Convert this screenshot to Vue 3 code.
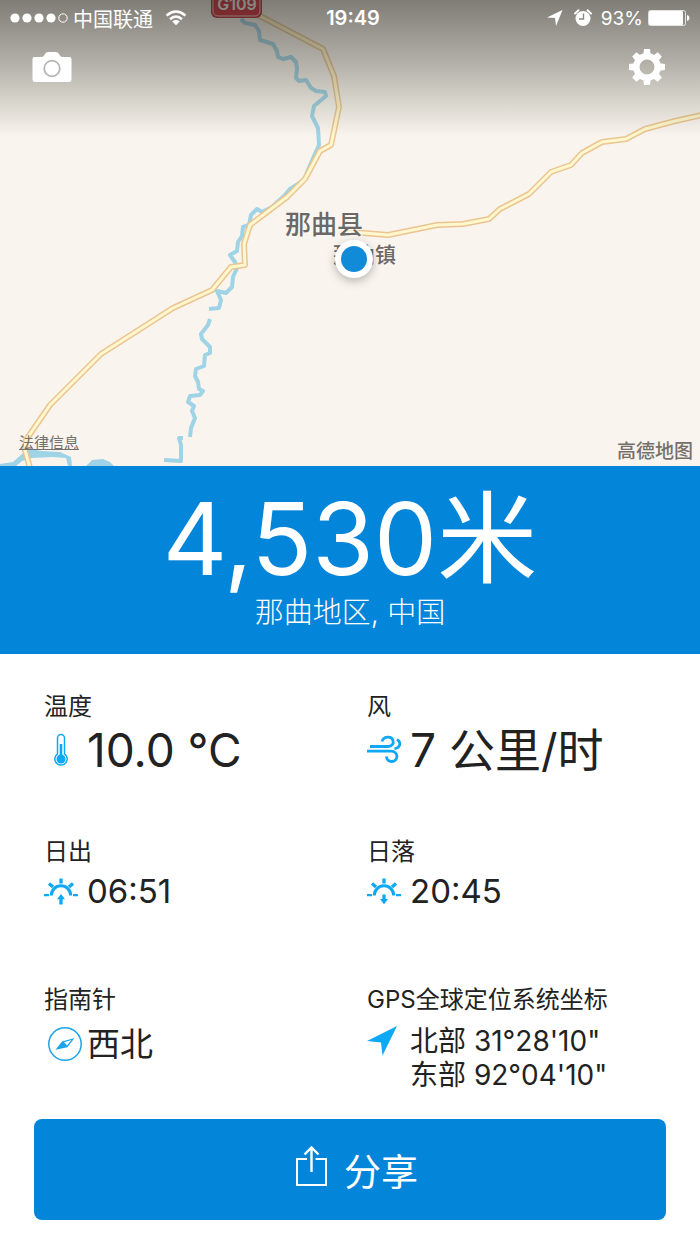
<script setup>
const teeth = [0, 45, 90, 135, 180, 225, 270, 315]
const road =
  'M240 8 L262 17 L323 49 L334 76 L339 107 L331 145 L320 151 L305 179 L287 197 L250 225 L244 244 L245 265 L231 267 L212 290 L173 308 L101 354 L50 405 L26 440 L25 450 L30 468'
const eastRoad =
  'M340 231 L388 235 L437 225 L463 224 L489 219 L500 209 L529 194 L551 172 L571 165 L582 153 L602 142 L626 139 L645 129 L675 121 L702 115'
</script>

<template>
  <main class="app">
    <section class="map" aria-label="地图">
      <svg class="map-art" viewBox="0 0 700 466" preserveAspectRatio="xMidYMax slice">
        <defs>
          <filter id="pinShadow" x="-50%" y="-50%" width="200%" height="200%">
            <feDropShadow dx="0" dy="3" stdDeviation="5" flood-color="#000" flood-opacity="0.28" />
          </filter>
        </defs>
        <g class="river">
          <path d="M241 19 L245 23 L255 25 L259 31 L260 40 L273 44 L277 51 L278 57 L283 59 L291 57 L296 62 L297 69 L296 78 L299 81 L306 80 L311 88 L316 91 L325 92 L326 96 L314 106 L312 116 L318 128 L319 145 L314 156 L308 170 L305 179 L298 184 L290 189 L284 196 L272 207 L262 212 L257 209 L251 215 L249 225 L243 227 L242 236 L238 242 L237 251 L230 255 L235 262 L237 268 L233 277 L232 287 L226 293 L217 291 L221 300 L219 308 L209 309" />
          <path d="M210 319 L208 325 L201 334 L202 339 L210 347 L210 353 L205 355 L204 366 L196 369 L195 376 L198 382 L199 389 L203 391 L200 395 L190 396 L188 402 L194 406 L192 411 L195 418 L191 428 L190 437" />
          <path d="M183 438 L179 438 L181 445 L181 461 L164 460" />
        </g>
        <path class="lake" d="M0 464 L13 462 L22 454 L30 449 L42 451 L60 452 L71 457 L72 466 L68 466 L66 458 L52 457 L32 458 L22 461 L16 466 L0 466Z M86 466 L92 460 L103 459 L110 462 L114 466Z" />
        <path class="road-edge" :d="eastRoad" />
        <path class="road-fill" :d="eastRoad" />
        <path class="road-edge" :d="road" />
        <path class="road-fill" :d="road" />
        <rect class="shield-rim" x="211" y="-16" width="51" height="34" rx="6" />
        <rect class="shield" x="213" y="-16" width="47" height="32" rx="5" />
        <text class="shield-text" x="237" y="10">G109</text>
        <text class="town county" x="285" y="234">那曲县</text>
        <text class="town" x="333" y="262">那曲镇</text>
        <circle cx="354" cy="259" r="19" fill="#fff" filter="url(#pinShadow)" />
        <circle cx="354" cy="259" r="13" fill="#118bd8" />
      </svg>
      <div class="shade"></div>

      <header class="overlay">
        <div class="status">
          <div class="carrier">
            <svg width="58" height="12" viewBox="0 0 58 12" fill="#fff">
              <circle cx="5" cy="6" r="4.6" /><circle cx="17" cy="6" r="4.6" />
              <circle cx="29" cy="6" r="4.6" /><circle cx="41" cy="6" r="4.6" />
              <circle cx="53" cy="6" r="4.2" fill="none" stroke="#fff" />
            </svg>
            <span>中国联通</span>
            <svg class="wifi" width="22" height="16" viewBox="0 0 22 16">
              <path d="M1.500 5.500 Q11 -2.500 20.500 5.500 M5 9.200 Q11 4 17 9.200" fill="none" stroke="#fff" stroke-width="2.600" />
              <path d="M7.200 11.500 Q11 8.600 14.800 11.500 L11 15.300Z" fill="#fff" />
            </svg>
          </div>
          <time class="clock">19:49</time>
          <div class="power">
            <svg width="16" height="16" viewBox="0 0 16 16"><path d="M0 7.500 L15.500 0 L9 16 L8 8Z" fill="#fff" /></svg>
            <svg class="alarm" width="18" height="18" viewBox="0 0 18 18">
              <circle cx="9" cy="9.500" r="7.500" fill="#fff" />
              <path d="M1 4.500 L4.500 1.300 M17 4.500 L13.500 1.300" stroke="#fff" stroke-width="2" stroke-linecap="round" />
              <path d="M9.500 4.500 V10 H5" fill="none" stroke="#8b8984" stroke-width="1.400" />
            </svg>
            <span class="percent">93%</span>
            <svg width="42" height="18" viewBox="0 0 42 18">
              <rect x="0.500" y="1.500" width="37" height="15" rx="2" fill="none" stroke="#fff" stroke-opacity=".75" />
              <rect x="1" y="2" width="34" height="14" rx="1" fill="#fff" />
              <path d="M39 6 Q41.500 6.500 41.500 9 T39 12Z" fill="#fff" />
            </svg>
          </div>
        </div>
        <div class="tools">
          <button type="button" aria-label="相机">
            <svg width="40" height="38" viewBox="0 0 40 38">
              <path d="M2 9 H9 Q11 9 12 7.500 L13 6 Q14 4 16 4 H24 Q26 4 27 6 L28 7.500 Q29 9 31 9 H37.500 Q39.500 9 39.500 11 V31.500 Q39.500 34 37.500 34 H2.500 Q.5 34 .5 31.500 V11 Q.5 9 2 9Z" fill="#fff" />
              <circle cx="20" cy="20.500" r="7.800" fill="none" stroke="#b5b3ae" stroke-width="1.700" />
            </svg>
          </button>
          <button type="button" aria-label="设置">
            <svg width="38" height="38" viewBox="-19 -19 38 38">
              <circle r="10.700" fill="none" stroke="#fff" stroke-width="6.400" />
              <path v-for="t in teeth" :key="t" :transform="`rotate(${t})`" d="M-3.700 -12 L-3 -18 H3 L3.700 -12Z" fill="#fff" />
            </svg>
          </button>
        </div>
      </header>

      <footer class="credits">
        <a href="#legal">法律信息</a>
        <span class="provider">高德地图</span>
      </footer>
    </section>

    <section class="altitude">
      <h1>4,530米</h1>
      <p>那曲地区, 中国</p>
    </section>

    <dl class="metrics">
      <div class="metric">
        <dt>温度</dt>
        <dd class="large">
          <svg class="icon" width="34" height="34" viewBox="0 0 34 34">
            <path d="M13.500 20.800 V5 A3.500 3.500 0 0 1 20.500 5 V20.800 A6.200 6.200 0 1 1 13.500 20.800Z" fill="none" stroke="#0ea8f4" stroke-width="1.500" />
            <path d="M17 11 V25" stroke="#0ea8f4" stroke-width="2.600" />
            <circle cx="17" cy="26" r="4.500" fill="#0ea8f4" />
          </svg>
          <span>10.0 °C</span>
        </dd>
      </div>
      <div class="metric">
        <dt>风</dt>
        <dd class="large">
          <svg class="icon" width="34" height="34" viewBox="0 0 34 34" fill="none" stroke="#0ea8f4" stroke-width="2.800">
            <path d="M3 13.500 H21 C25 13.500 27 10.500 26 7.500 C24.500 2.500 16.500 3 15 8.500" />
            <path d="M0 18.200 H24 C31.500 18.200 32 28 25 28.500 C22 28.700 19.500 27 19.500 23.500" />
            <path d="M27.500 15.500 C33.500 15 34.500 9 30 6.500" />
          </svg>
          <span>7 公里/时</span>
        </dd>
      </div>
      <div class="metric sun">
        <dt>日出</dt>
        <dd>
          <svg class="icon" width="34" height="34" viewBox="0 0 34 34" fill="none" stroke="#0ea8f4" stroke-width="3">
            <path d="M7.300 21.500 A9.700 9.700 0 0 1 26.700 21.500" />
            <path d="M17 4.500 V9.500 M5 9.500 L9 13 M29 9.500 L25 13" stroke-width="3.300" />
            <path d="M0 21.200 H5 M29 21.200 H34" stroke-width="2.200" />
            <path d="M17 30.500 V24" stroke-width="3.300" /><path d="M13 25.200 L17 20 L21 25.200Z" fill="#0ea8f4" stroke="none" />
          </svg>
          <span>06:51</span>
        </dd>
      </div>
      <div class="metric sun">
        <dt>日落</dt>
        <dd>
          <svg class="icon" width="34" height="34" viewBox="0 0 34 34" fill="none" stroke="#0ea8f4" stroke-width="3">
            <path d="M7.300 21.500 A9.700 9.700 0 0 1 26.700 21.500" />
            <path d="M17 4.500 V9.500 M5 9.500 L9 13 M29 9.500 L25 13" stroke-width="3.300" />
            <path d="M0 21.200 H5 M29 21.200 H34" stroke-width="2.200" />
            <path d="M17 20.500 V26" stroke-width="3.300" /><path d="M13 25 L17 30.200 L21 25Z" fill="#0ea8f4" stroke="none" />
          </svg>
          <span>20:45</span>
        </dd>
      </div>
      <div class="metric">
        <dt>指南针</dt>
        <dd class="heading">
          <svg class="icon compass" width="34" height="34" viewBox="0 0 34 34">
            <circle cx="17" cy="17" r="16.200" fill="none" stroke="#1aa5ea" stroke-width="1.500" />
            <path d="M7.500 22.800 L14 14.500 L26.500 11 L19.500 20.200Z" fill="#1aa5ea" />
            <path d="M18 17.300 L16 15.200 L23.500 13 L19 18.500Z" fill="#fff" />
          </svg>
          <span>西北</span>
        </dd>
      </div>
      <div class="metric">
        <dt>GPS全球定位系统坐标</dt>
        <dd class="coords">
          <svg class="icon" width="34" height="34" viewBox="0 0 34 34"><path d="M0 17 L30 2 L15.500 31.500 L14 18.500Z" fill="#0ea8f4" /></svg>
          <span>北部 31°28'10"<br />东部 92°04'10"</span>
        </dd>
      </div>
    </dl>

    <button class="share" type="button">
      <svg class="share-icon" width="34" height="42" viewBox="0 0 34 42" fill="none" stroke="#fff" stroke-width="2">
        <path d="M13 14 H3 V40 H32 V14 H21.500" />
        <path d="M17.500 27 V3 M10.500 9.500 L17.500 2.500 L24.500 9.500" stroke-width="2.400" />
      </svg>
      <span>分享</span>
    </button>
  </main>
</template>

<style>
body {
  margin: 0;
  background: #fff;
}
</style>

<style scoped>
.app {
  font-family: Inter, "Noto Sans CJK SC", sans-serif;
  font-weight: 390;
  color: #222;
  background: #fff;
}
button {
  border: 0;
  padding: 0;
  background: none;
  color: inherit;
  font: inherit;
  cursor: pointer;
}
svg {
  display: block;
  flex: none;
}
.map {
  position: relative;
  display: flex;
  flex-direction: column;
  justify-content: space-between;
  min-height: 466px;
  overflow: hidden;
  background: #f9f4ee;
}
.map-art {
  position: absolute;
  inset: 0;
  width: 100%;
  height: 100%;
}
.shade {
  position: absolute;
  inset: 0 0 auto;
  height: 136px;
  background: linear-gradient(rgba(45, 45, 38, 0.6), rgba(55, 55, 45, 0.37) 45%, rgba(80, 85, 65, 0.19) 76%, rgba(110, 110, 90, 0));
}
.river path {
  fill: none;
  stroke: #9fd3e6;
  stroke-width: 4;
  stroke-linejoin: round;
}
.lake {
  fill: #9fd3e6;
}
.road-edge {
  fill: none;
  stroke: #ebc591;
  stroke-width: 6;
  stroke-linejoin: round;
}
.road-fill {
  fill: none;
  stroke: #fff7cd;
  stroke-width: 3;
  stroke-linejoin: round;
}
.shield-rim {
  fill: #b92b36;
}
.shield {
  fill: #d62737;
  stroke: #f3cdd0;
  stroke-width: 1;
}
.shield-text {
  fill: #fff;
  font-size: 16px;
  font-weight: 600;
  text-anchor: middle;
}
.town {
  fill: #6b6866;
  stroke: #fbf7f2;
  stroke-width: 2;
  paint-order: stroke;
  font-size: 21px;
  font-weight: 500;
}
.county {
  font-size: 26px;
}
.overlay,
.credits {
  position: relative;
  color: #fff;
}
.status {
  display: grid;
  grid-template-columns: 1fr auto 1fr;
  align-items: center;
  height: 36px;
  padding: 0 10px;
  font-size: 20px;
}
.carrier,
.power {
  display: flex;
  align-items: center;
  gap: 5px;
}
.wifi {
  margin-left: 7px;
}
.clock {
  padding-left: 6px;
  font-size: 20px;
  font-weight: 600;
}
.power {
  justify-content: flex-end;
}
.percent {
  font-size: 19px;
}
.alarm {
  margin: 0 4px 0 6px;
}
.tools {
  display: flex;
  justify-content: space-between;
  padding: 12px 34px 0 32px;
}
.credits {
  display: flex;
  justify-content: space-between;
  align-items: flex-end;
  padding: 0 7px 2px 19px;
  color: #74706c;
}
.credits a {
  padding-bottom: 10px;
  color: inherit;
  font-size: 15px;
  font-weight: 400;
  line-height: 22px;
}
.provider {
  font-size: 19px;
  font-weight: 500;
  line-height: 24px;
}
.altitude {
  padding: 16px 0 24px;
  background: #0385da;
  color: #fff;
  text-align: center;
}
h1,
p,
dl,
dd {
  margin: 0;
}
h1 {
  font-size: 100px;
  font-weight: 390;
  line-height: 114px;
}
.altitude p {
  font-size: 29px;
  font-weight: 300;
  line-height: 34px;
}
.metrics {
  display: grid;
  grid-template-columns: 1fr 1fr;
  row-gap: 59px;
  padding: 39px 10px 0 44px;
}
.sun {
  padding-bottom: 11px;
}
dt {
  font-size: 24px;
  line-height: 28px;
}
dd {
  display: flex;
  align-items: center;
  gap: 9px;
  font-size: 33px;
  line-height: 50px;
}
.large {
  font-size: 46px;
  line-height: 58px;
}
.heading {
  gap: 5px;
  line-height: 60px;
}
.compass {
  margin-left: 4px;
}
.coords {
  align-items: flex-start;
  padding-top: 10px;
  font-size: 28px;
  line-height: 34px;
}
.share {
  display: flex;
  justify-content: center;
  align-items: center;
  gap: 16px;
  width: calc(100% - 68px);
  min-height: 101px;
  margin: 27px 34px 24px;
  padding-left: 12px;
  border-radius: 8px;
  background: #0385da;
  color: #fff;
  font-size: 37px;
}
.share-icon {
  margin-bottom: 8px;
}
</style>
